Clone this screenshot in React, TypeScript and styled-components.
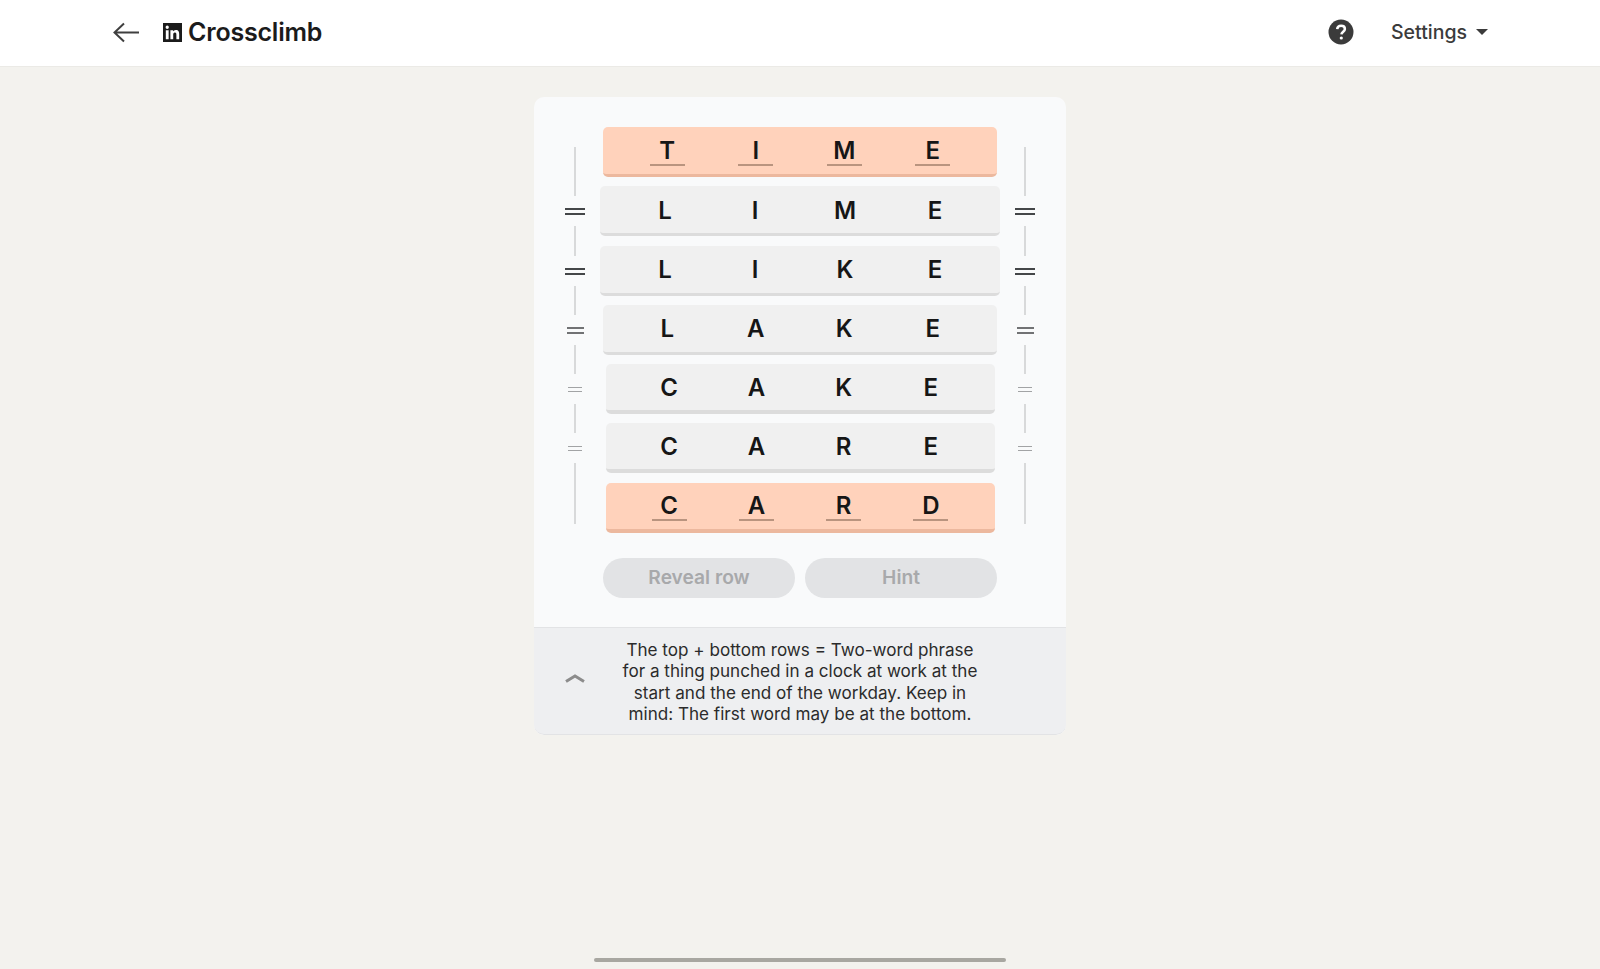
import styled, { createGlobalStyle } from 'styled-components';

const GlobalStyle = createGlobalStyle`
  html, body {
    margin: 0;
    padding: 0;
    background: #f3f2ee;
    font-family: Inter, "Liberation Sans", sans-serif;
  }
`;

const Page = styled.div`
  min-height: 100vh;
  display: flex;
  flex-direction: column;
  overflow: hidden;
`;

const Header = styled.header`
  height: 64px;
  flex: none;
  background: #fff;
  border-bottom: 1px solid #ebeae6;
  display: flex;
  align-items: center;
  padding: 0 112px 2px;
  color: #1b1b1b;
`;

const BackButton = styled.button`
  width: 28px;
  height: 28px;
  padding: 0;
  margin-right: 23px;
  border: 0;
  background: none;
  color: #3f3f3f;
  display: flex;
`;

const Title = styled.h1`
  margin: 0 0 0 6px;
  font-size: 25px;
  font-weight: 600;
  letter-spacing: -0.2px;
`;

const HeaderRight = styled.div`
  margin-left: auto;
  display: flex;
  align-items: center;
  gap: 37px;
  color: #3b3b3b;
`;

const Settings = styled.div`
  display: flex;
  align-items: center;
  gap: 9px;
  font-size: 19.5px;
  font-weight: 500;
`;

const Caret = styled.span`
  width: 0;
  height: 0;
  border-left: 6px solid transparent;
  border-right: 6px solid transparent;
  border-top: 6px solid #3b3b3b;
`;

const Card = styled.main`
  width: 532px;
  margin: 30px auto 0;
  background: #f9fafb;
  border-radius: 10px;
  overflow: hidden;
`;

const Board = styled.div`
  display: grid;
  grid-template-columns: 50px 400px 50px;
  justify-content: center;
  padding-top: 30px;
`;

const Connector = styled.div`
  margin-top: 20px;
  height: 377px;
  display: flex;
  flex-direction: column;
  align-items: center;
`;

const Line = styled.div<{ $h: number }>`
  width: 2px;
  height: ${(p) => p.$h}px;
  margin: 0 auto;
  background: #d8d9da;
`;

const EqualBox = styled.div`
  height: 30px;
  display: flex;
  align-items: center;
`;

const Equal = styled.div<{ $w: number; $color: string; $bar: number }>`
  box-sizing: border-box;
  width: ${(p) => p.$w}px;
  height: ${(p) => p.$bar * 2 + 3}px;
  border-top: ${(p) => p.$bar}px solid ${(p) => p.$color};
  border-bottom: ${(p) => p.$bar}px solid ${(p) => p.$color};
`;

const Rows = styled.div`
  display: flex;
  flex-direction: column;
  align-items: center;
  gap: 9.3px;
`;

const Row = styled.div<{ $w: number; $edge: number; $hot?: boolean }>`
  box-sizing: border-box;
  width: ${(p) => p.$w}px;
  height: 50px;
  padding: 0 5%;
  display: grid;
  grid-template-columns: repeat(4, 1fr);
  align-items: center;
  justify-items: center;
  border-radius: 5px;
  background: ${(p) => (p.$hot ? '#ffd2bb' : '#f0f0f0')};
  border-bottom: ${(p) => p.$edge}px solid ${(p) => (p.$hot ? '#ecb89e' : '#dcdcdc')};
`;

const Letter = styled.span<{ $hot?: boolean }>`
  width: 35px;
  height: 28px;
  line-height: 30px;
  text-align: center;
  font-size: 24px;
  font-weight: 560;
  color: #161616;
  border-bottom: ${(p) => (p.$hot ? '2px solid #b9947f' : 'none')};
`;

const Buttons = styled.div`
  display: flex;
  justify-content: center;
  gap: 10px;
  padding: 25px 0 29px;
`;

const PillButton = styled.button`
  width: 192px;
  height: 40px;
  padding: 0 0 2px;
  border: 0;
  border-radius: 20px;
  background: #e2e3e5;
  color: #a8a9ab;
  font-family: inherit;
  font-size: 19.2px;
  font-weight: 600;
`;

const Clue = styled.footer`
  height: 106px;
  background: #eeeff1;
  border-top: 1px solid #e2e3e5;
  border-bottom: 1px solid #e2e3e5;
  border-radius: 0 0 10px 10px;
  display: grid;
  grid-template-columns: 82px 1fr 82px;
  align-items: center;
  justify-items: center;
`;

const ChevronBox = styled.div`
  color: #8c8c8c;
  display: flex;
  margin-bottom: 6px;
`;

const ClueText = styled.p`
  margin: 0;
  padding-top: 2px;
  width: 358px;
  text-align: center;
  font-size: 17.1px;
  line-height: 21.4px;
  color: #2b2b2b;
`;

const ScrollThumb = styled.div`
  margin: auto auto 7px;
  width: 412px;
  height: 4px;
  border-radius: 2px;
  background: #a8a7a1;
`;

const linkedinPath =
  'M20.447 20.452h-3.554v-5.569c0-1.328-.027-3.037-1.852-3.037-1.853 0-2.136 1.445-2.136 2.939v5.667H9.351V9h3.414v1.561h.046c.477-.9 1.637-1.85 3.37-1.85 3.601 0 4.267 2.37 4.267 5.455v6.286zM5.337 7.433a2.062 2.062 0 01-2.063-2.065 2.064 2.064 0 112.063 2.065zm1.782 13.019H3.555V9h3.564v11.452zM24 0H0v24h24z';

const rows = [
  { word: 'TIME', w: 394, edge: 3, hot: true },
  { word: 'LIME', w: 400, edge: 3 },
  { word: 'LIKE', w: 400, edge: 3 },
  { word: 'LAKE', w: 394, edge: 3 },
  { word: 'CAKE', w: 389, edge: 4 },
  { word: 'CARE', w: 389, edge: 4 },
  { word: 'CARD', w: 389, edge: 4, hot: true },
];

const links = [
  { line: 49, w: 20, color: '#444648', bar: 2 },
  { line: 30, w: 20, color: '#444648', bar: 2 },
  { line: 29, w: 17, color: '#717274', bar: 2 },
  { line: 29, w: 14, color: '#a2a3a5', bar: 1 },
  { line: 29, w: 14, color: '#a2a3a5', bar: 1 },
];

function ConnectorColumn() {
  return (
    <Connector>
      {links.map((l, i) => (
        <div key={i}>
          <Line $h={l.line} />
          <EqualBox>
            <Equal $w={l.w} $color={l.color} $bar={l.bar} />
          </EqualBox>
        </div>
      ))}
      <Line $h={61} />
    </Connector>
  );
}

export default function App() {
  return (
    <Page>
      <GlobalStyle />
      <Header>
        <BackButton>
          <svg width="28" height="28" viewBox="0 0 28 28" fill="none" stroke="currentColor" strokeWidth="2">
            <path d="M27 14.5H3M12 5.5l-9.5 9 9.5 9" />
          </svg>
        </BackButton>
        <svg width="19" height="19" viewBox="0 0 24 24" fill="#1b1b1b" fillRule="evenodd">
          <path d={linkedinPath} />
        </svg>
        <Title>Crossclimb</Title>
        <HeaderRight>
          <svg width="26" height="26" viewBox="0 0 26 26">
            <circle cx="13" cy="13" r="12.5" fill="#3b3b3b" />
            <path d="M9.2 10.2c.2-2.2 1.8-3.4 3.9-3.4 2.2 0 3.8 1.3 3.8 3.2 0 2.6-3.3 2.8-3.5 5.4" fill="none" stroke="#fff" strokeWidth="2.5" />
            <circle cx="13.3" cy="19" r="1.6" fill="#fff" />
          </svg>
          <Settings>
            Settings
            <Caret />
          </Settings>
        </HeaderRight>
      </Header>
      <Card>
        <Board>
          <ConnectorColumn />
          <Rows>
            {rows.map((r) => (
              <Row key={r.word} $w={r.w} $edge={r.edge} $hot={r.hot}>
                {r.word.split('').map((c, i) => (
                  <Letter key={i} $hot={r.hot}>
                    {c}
                  </Letter>
                ))}
              </Row>
            ))}
          </Rows>
          <ConnectorColumn />
        </Board>
        <Buttons>
          <PillButton>Reveal row</PillButton>
          <PillButton>Hint</PillButton>
        </Buttons>
        <Clue>
          <ChevronBox>
            <svg width="20" height="10" viewBox="0 0 20 10" fill="none" stroke="currentColor" strokeWidth="3">
              <path d="M1 8.5l9-5.5 9 5.5" />
            </svg>
          </ChevronBox>
          <ClueText>
            The top + bottom rows = Two-word phrase for a thing punched in a clock at work at the start and the end of
            the workday. Keep in mind: The first word may be at the bottom.
          </ClueText>
        </Clue>
      </Card>
      <ScrollThumb />
    </Page>
  );
}
